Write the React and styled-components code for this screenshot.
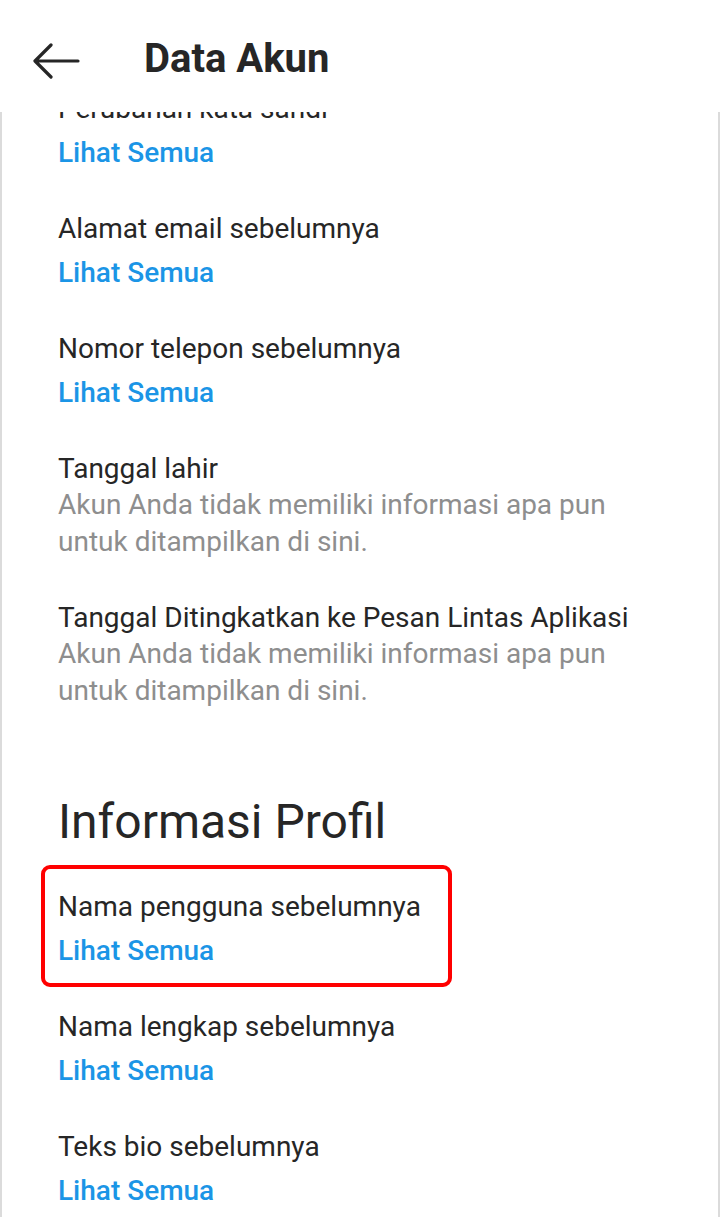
import styled, { createGlobalStyle } from "styled-components";

const GlobalStyle = createGlobalStyle`
  html, body {
    margin: 0;
    padding: 0;
    background: #ffffff;
  }
  body {
    font-family: Roboto, "Noto Sans", "Liberation Sans", sans-serif;
    color: #262626;
  }
`;

const Page = styled.div`
  display: flex;
  flex-direction: column;
  height: 100vh;
  overflow: hidden;
`;

const Header = styled.header`
  flex: 0 0 112px;
  display: flex;
  align-items: center;
  padding: 4px 0 0 32px;
  background: #ffffff;
  box-sizing: border-box;
`;

const BackButton = styled.button`
  display: flex;
  align-items: center;
  justify-content: center;
  width: 50px;
  height: 50px;
  padding: 0;
  margin: 6px 62px 0 0;
  border: none;
  background: none;
  color: #262626;
  cursor: pointer;
`;

const Title = styled.h1`
  margin: 0;
  font-size: 40px;
  font-weight: 700;
  color: #262626;
`;

const Panel = styled.main`
  flex: 1;
  overflow: hidden;
  border-left: 2px solid #dbdbdb;
  border-right: 2px solid #dbdbdb;
  background: #ffffff;
`;

const List = styled.div`
  display: flex;
  flex-direction: column;
  margin-top: -43px;
  padding-left: 56px;
`;

const Item = styled.div`
  display: flex;
  flex-direction: column;
  padding: 22px 0 18px;
  box-sizing: border-box;

  ${({ $highlighted }) =>
    $highlighted &&
    `
    width: 411px;
    margin-left: -17px;
    padding: 20px 0 14px 13px;
    border: 4px solid #ff0000;
    border-radius: 9px;
  `}
`;

const Label = styled.div`
  font-size: 28px;
  line-height: 36px;
  white-space: nowrap;
  color: #262626;
`;

const Link = styled.a`
  margin-top: 8px;
  font-size: 28px;
  line-height: 36px;
  font-weight: 500;
  color: #1b95e6;
  text-decoration: none;
  cursor: pointer;
`;

const Empty = styled.div`
  font-size: 28px;
  line-height: 36.5px;
  color: #8e8e8e;
  max-width: 600px;
`;

const SectionTitle = styled.h2`
  margin: 67px 0 15px;
  font-size: 48px;
  line-height: 56px;
  font-weight: 400;
  color: #262626;
`;

const accountItems = [
  { label: "Perubahan kata sandi" },
  { label: "Alamat email sebelumnya" },
  { label: "Nomor telepon sebelumnya" },
  { label: "Tanggal lahir", empty: true },
  { label: "Tanggal Ditingkatkan ke Pesan Lintas Aplikasi", empty: true },
];

const profileItems = [
  { label: "Nama pengguna sebelumnya", highlighted: true },
  { label: "Nama lengkap sebelumnya" },
  { label: "Teks bio sebelumnya" },
];

function BackArrow() {
  return (
    <svg width="48" height="36" viewBox="0 0 48 36" fill="none">
      <path
        d="M45 18H3M18 2L2 18l16 16"
        stroke="currentColor"
        strokeWidth="3.2"
        strokeLinecap="round"
        strokeLinejoin="round"
      />
    </svg>
  );
}

function DataItem({ label, empty, highlighted }) {
  return (
    <Item $highlighted={highlighted}>
      <Label>{label}</Label>
      {empty ? (
        <Empty>Akun Anda tidak memiliki informasi apa pun untuk ditampilkan di sini.</Empty>
      ) : (
        <Link>Lihat Semua</Link>
      )}
    </Item>
  );
}

export default function App() {
  return (
    <>
      <GlobalStyle />
      <Page>
        <Header>
          <BackButton aria-label="Kembali">
            <BackArrow />
          </BackButton>
          <Title>Data Akun</Title>
        </Header>
        <Panel>
          <List>
            {accountItems.map((item) => (
              <DataItem key={item.label} {...item} />
            ))}
            <SectionTitle>Informasi Profil</SectionTitle>
            {profileItems.map((item) => (
              <DataItem key={item.label} {...item} />
            ))}
          </List>
        </Panel>
      </Page>
    </>
  );
}
